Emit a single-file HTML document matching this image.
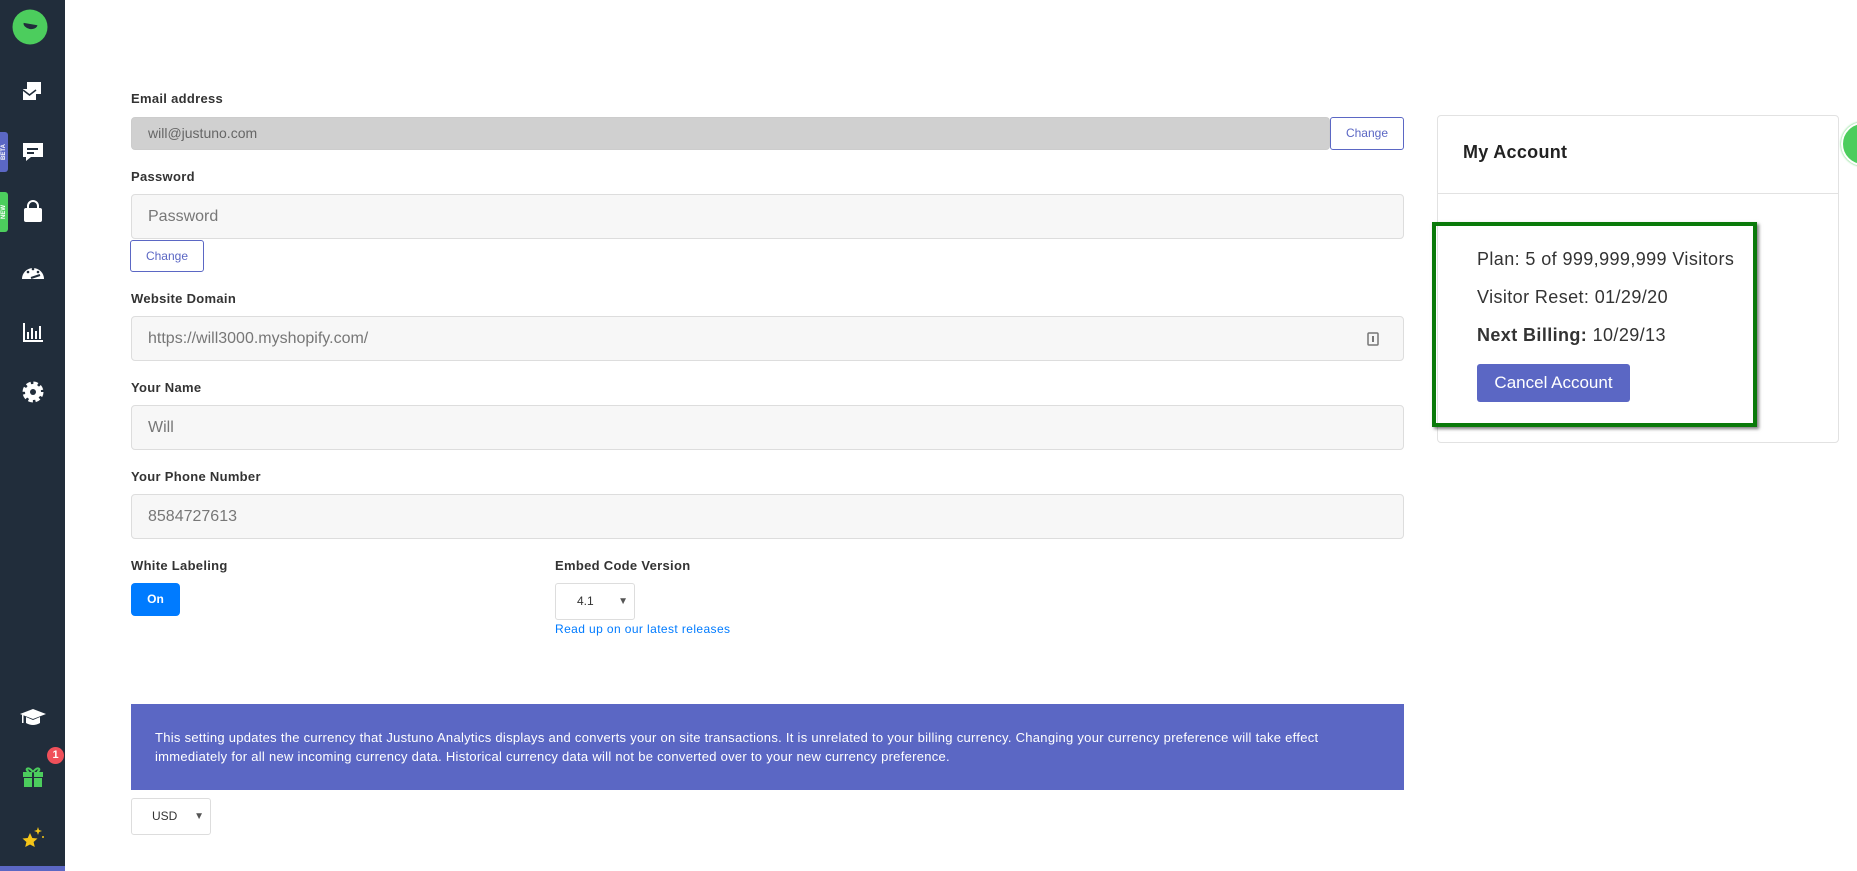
<!DOCTYPE html>
<html><head><style>
*{box-sizing:border-box;margin:0;padding:0}
body{width:1857px;height:871px;background:#fff;font-family:"Liberation Sans",sans-serif;position:relative;overflow:hidden;color:#222}
.sb{position:absolute;left:0;top:0;width:65px;height:871px;background:#212d3b}
.ic{position:absolute;left:18px;width:30px;height:30px}
.lbl{position:absolute;left:131px;font-size:13px;font-weight:bold;color:#333;letter-spacing:.3px}
.inp{position:absolute;left:131px;width:1273px;height:45px;background:#f7f7f7;border:1px solid #ddd;border-radius:4px;font-size:16px;color:#777;padding-left:16px;line-height:43px}
.btn{position:absolute;border:1px solid #5b67c4;border-radius:3px;color:#5b67c4;font-size:12px;text-align:center;background:#fff}
.sel{position:absolute;border:1px solid #ddd;border-radius:3px;font-size:12px;color:#333;background:#fff}
.sel span{position:absolute;right:6px;font-size:10px;color:#555}
.acc{position:absolute;left:1477px;font-size:18px;color:#333;letter-spacing:.4px}
.tag{position:absolute;left:0;width:8px;height:40px;border-radius:0 3px 3px 0;color:#fff;font-size:6px;font-weight:bold}
.tag i{position:absolute;left:-12px;top:16px;width:32px;text-align:center;transform:rotate(-90deg);font-style:normal;line-height:8px}
</style></head><body>
<div class="sb">
 <svg class="ic" style="left:12px;top:9px;width:36px;height:36px" viewBox="0 0 36 36"><circle cx="18" cy="18" r="17.5" fill="#4ccd5d"/><path d="M11 15 H25 A7 5 0 0 1 11 15Z" fill="#212d3b" transform="rotate(10 18 18)"/></svg>
 <svg class="ic" style="top:77px" viewBox="0 0 30 30"><rect x="9" y="5" width="14" height="9" fill="#fff"/><rect x="13" y="9" width="10" height="8" fill="#fff"/><rect x="5" y="12" width="13" height="11" fill="#fff"/><path d="M5 13 L11.5 18 L18 13" stroke="#212d3b" stroke-width="1.5" fill="none"/></svg>
 <svg class="ic" style="top:137px" viewBox="0 0 30 30"><path d="M5 6 H25 V20 H13 L8 24 V20 H5Z" fill="#fff"/><rect x="9" y="11" width="11" height="2" fill="#212d3b"/><rect x="9" y="15" width="7" height="2" fill="#212d3b"/></svg>
 <svg class="ic" style="top:197px" viewBox="0 0 30 30"><rect x="6" y="11" width="18" height="14" rx="2" fill="#fff"/><path d="M10 12 V9 A5 5 0 0 1 20 9 V12" stroke="#fff" stroke-width="2" fill="none"/></svg>
 <svg class="ic" style="top:257px" viewBox="0 0 30 30"><path d="M4 22 A11 11 0 0 1 26 22 Z" fill="#fff"/><circle cx="10" cy="15" r="1.3" fill="#212d3b"/><circle cx="15" cy="12" r="1.3" fill="#212d3b"/><circle cx="20" cy="15" r="1.3" fill="#212d3b"/><path d="M13 21 L22 18" stroke="#212d3b" stroke-width="2"/></svg>
 <svg class="ic" style="top:317px" viewBox="0 0 30 30"><path d="M6 6 V24 H25" stroke="#fff" stroke-width="2" fill="none"/><rect x="9" y="15" width="2" height="7" fill="#fff"/><rect x="13" y="11" width="2" height="11" fill="#fff"/><rect x="17" y="14" width="2" height="8" fill="#fff"/><rect x="21" y="9" width="2" height="13" fill="#fff"/></svg>
 <svg class="ic" style="top:377px" viewBox="0 0 30 30"><circle cx="15" cy="15" r="8" fill="#fff" stroke="#fff" stroke-width="5" stroke-dasharray="4 2.3"/><circle cx="15" cy="15" r="3" fill="#212d3b"/></svg>
 <div class="tag" style="top:132px;background:#5b67c4"><i>BETA</i></div>
 <div class="tag" style="top:192px;background:#4ccd5d"><i>NEW</i></div>
 <svg class="ic" style="top:702px" viewBox="0 0 30 30"><path d="M2 12 L15 7 L28 12 L15 17Z" fill="#fff"/><path d="M8 15 V21 Q15 25 22 21 V15 L15 18Z" fill="#fff"/><rect x="4" y="13" width="1.5" height="8" fill="#fff"/></svg>
 <svg class="ic" style="top:762px" viewBox="0 0 30 30"><rect x="5" y="10" width="20" height="5" fill="#4ccd5d"/><rect x="6" y="16" width="18" height="9" fill="#4ccd5d"/><rect x="14" y="10" width="2" height="15" fill="#212d3b"/><path d="M15 10 C10 3 6 8 11 10 M15 10 C20 3 24 8 19 10" stroke="#4ccd5d" stroke-width="2" fill="none"/></svg>
 <div style="position:absolute;left:47px;top:747px;width:17px;height:17px;border-radius:50%;background:#f0505a;color:#fff;font-size:11px;font-weight:bold;text-align:center;line-height:17px">1</div>
 <svg class="ic" style="top:822px" viewBox="0 0 30 30"><path d="M12 11 L14.3 16 L19.5 16.5 L15.6 20 L16.8 25 L12 22.5 L7.2 25 L8.4 20 L4.5 16.5 L9.7 16Z" fill="#f5c518"/><path d="M20 5 L21 8 L24 9 L21 10 L20 13 L19 10 L16 9 L19 8Z" fill="#f5c518"/><circle cx="25" cy="15" r="1" fill="#f5c518"/></svg>
 <div style="position:absolute;left:0;top:866px;width:65px;height:5px;background:#5b67c4"></div>
</div>

<div class="lbl" style="top:91px">Email address</div>
<div class="inp" style="top:117px;height:33px;width:1199px;background:#d0d0d0;border-color:#ccc;font-size:14px;line-height:31px;color:#666;padding-left:16px">will@justuno.com</div>
<div class="btn" style="left:1330px;top:117px;width:74px;height:33px;line-height:31px">Change</div>

<div class="lbl" style="top:169px">Password</div>
<div class="inp" style="top:194px">Password</div>
<div class="btn" style="left:130px;top:240px;width:74px;height:32px;line-height:30px">Change</div>

<div class="lbl" style="top:291px">Website Domain</div>
<div class="inp" style="top:316px">https://will3000.myshopify.com/<svg style="position:absolute;right:24px;top:15px" width="12" height="14" viewBox="0 0 12 14"><rect x="1" y="1" width="10" height="12" rx="1" fill="none" stroke="#777" stroke-width="1.5"/><rect x="5" y="4" width="2" height="6" fill="#777"/></svg></div>

<div class="lbl" style="top:380px">Your Name</div>
<div class="inp" style="top:405px">Will</div>

<div class="lbl" style="top:469px">Your Phone Number</div>
<div class="inp" style="top:494px">8584727613</div>

<div class="lbl" style="top:558px">White Labeling</div>
<div style="position:absolute;left:131px;top:583px;width:49px;height:33px;background:#007bff;border-radius:4px;color:#fff;font-size:12px;font-weight:bold;text-align:center;line-height:33px">On</div>

<div class="lbl" style="left:555px;top:558px">Embed Code Version</div>
<div class="sel" style="left:555px;top:583px;width:80px;height:37px;line-height:35px;padding-left:21px">4.1<span>▼</span></div>
<div style="position:absolute;left:555px;top:622px;font-size:12px;color:#007bff;letter-spacing:.4px">Read up on our latest releases</div>

<div style="position:absolute;left:131px;top:704px;width:1273px;height:86px;background:#5b67c4;color:#fff;font-size:13px;letter-spacing:.28px;padding:24px 24px;line-height:19px">This setting updates the currency that Justuno Analytics displays and converts your on site transactions. It is unrelated to your billing currency. Changing your currency preference will take effect immediately for all new incoming currency data. Historical currency data will not be converted over to your new currency preference.</div>
<div class="sel" style="left:131px;top:798px;width:80px;height:37px;line-height:35px;padding-left:20px">USD<span>▼</span></div>

<div style="position:absolute;left:1437px;top:115px;width:402px;height:328px;border:1px solid #e2e2e2;border-radius:4px"></div>
<div style="position:absolute;left:1437px;top:193px;width:402px;height:1px;background:#e2e2e2"></div>
<div style="position:absolute;left:1463px;top:142px;font-size:18px;font-weight:bold;color:#222;letter-spacing:.3px">My Account</div>
<div style="position:absolute;left:1432px;top:222px;width:325px;height:205px;border:4px solid #0a7a0a;box-shadow:2px 2px 3px rgba(0,0,0,.5)"></div>
<div class="acc" style="top:249px">Plan: 5 of 999,999,999 Visitors</div>
<div class="acc" style="top:287px">Visitor Reset: 01/29/20</div>
<div class="acc" style="top:325px"><b>Next Billing:</b> 10/29/13</div>
<div style="position:absolute;left:1477px;top:364px;width:153px;height:38px;background:#5b67c4;border-radius:3px;color:#fff;font-size:17px;text-align:center;line-height:38px">Cancel Account</div>
<div style="position:absolute;left:1841px;top:122px;width:44px;height:44px;border-radius:50%;background:#4ccd5d;border:2px solid #fff;box-shadow:0 0 2px #4ccd5d"></div>
</body></html>
